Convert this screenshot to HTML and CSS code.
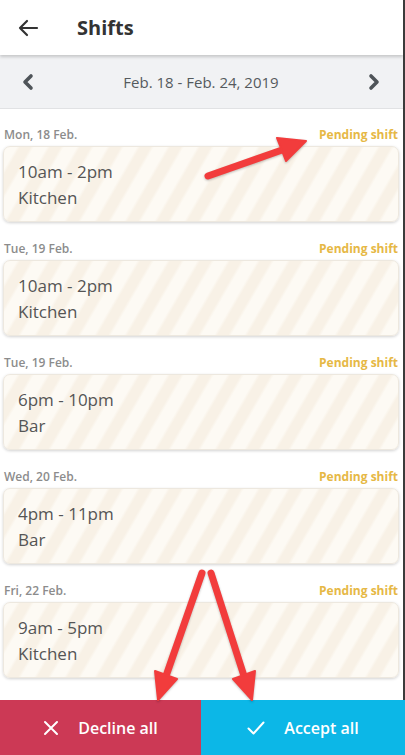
FILE: index.html
```html
<!DOCTYPE html>
<html lang="en">
<head>
    <meta charset="UTF-8">
    <meta name="viewport" content="width=device-width, initial-scale=1.0">
    <title>Shifts</title>
    <link rel="stylesheet" href="styles.css">
</head>
<body>
    <div class="app">
        <div class="screen">
            <header class="topbar">
                <svg class="back" width="22" height="18" viewBox="0 0 22 18">
                    <path d="M20 9H3M10 2L3 9l7 7" fill="none" stroke="#333" stroke-width="2.2" stroke-linecap="round" stroke-linejoin="round"/>
                </svg>
                <h1>Shifts</h1>
            </header>

            <div class="week-nav">
                <svg width="14" height="18" viewBox="0 0 14 18">
                    <path d="M10 3L4 9l6 6" fill="none" stroke="#4f5459" stroke-width="3.6" stroke-linecap="round" stroke-linejoin="round"/>
                </svg>
                <span>Feb. 18 - Feb. 24, 2019</span>
                <svg width="14" height="18" viewBox="0 0 14 18">
                    <path d="M4 3l6 6-6 6" fill="none" stroke="#4f5459" stroke-width="3.6" stroke-linecap="round" stroke-linejoin="round"/>
                </svg>
            </div>

            <div class="shift-list">
                <div class="day">
                    <div class="day-head"><span>Mon, 18 Feb.</span><span class="status">Pending shift</span></div>
                    <div class="shift-card"><div>10am - 2pm</div><div>Kitchen</div></div>
                </div>
                <div class="day">
                    <div class="day-head"><span>Tue, 19 Feb.</span><span class="status">Pending shift</span></div>
                    <div class="shift-card"><div>10am - 2pm</div><div>Kitchen</div></div>
                </div>
                <div class="day">
                    <div class="day-head"><span>Tue, 19 Feb.</span><span class="status">Pending shift</span></div>
                    <div class="shift-card"><div>6pm - 10pm</div><div>Bar</div></div>
                </div>
                <div class="day">
                    <div class="day-head"><span>Wed, 20 Feb.</span><span class="status">Pending shift</span></div>
                    <div class="shift-card"><div>4pm - 11pm</div><div>Bar</div></div>
                </div>
                <div class="day">
                    <div class="day-head"><span>Fri, 22 Feb.</span><span class="status">Pending shift</span></div>
                    <div class="shift-card"><div>9am - 5pm</div><div>Kitchen</div></div>
                </div>
            </div>
        </div>

        <div class="actions">
            <button class="btn decline">
                <svg width="16" height="16" viewBox="0 0 16 16">
                    <path d="M2 2l12 12M14 2L2 14" stroke="#fff" stroke-width="2" stroke-linecap="round"/>
                </svg>
                Decline all
            </button>
            <button class="btn accept">
                <svg width="18" height="14" viewBox="0 0 18 14">
                    <path d="M1.5 7.5l5 5L16.5 1.5" fill="none" stroke="#fff" stroke-width="2" stroke-linecap="round" stroke-linejoin="round"/>
                </svg>
                Accept all
            </button>
        </div>

        <!-- annotation arrows drawn over the screenshot -->
        <svg class="arrows" width="405" height="755" viewBox="0 0 405 755">
            <g fill="#f23c3c" stroke="#f23c3c" stroke-linecap="round" stroke-linejoin="round">
                <line x1="208" y1="176" x2="282" y2="150" stroke-width="7"/>
                <polygon points="306,141 286,161 277,138" stroke-width="2"/>
                <line x1="202" y1="573" x2="166" y2="676" stroke-width="7"/>
                <polygon points="158,700 177,679 155,671" stroke-width="2"/>
                <line x1="211" y1="573" x2="244" y2="676" stroke-width="7"/>
                <polygon points="252,700 255,671 233,679" stroke-width="2"/>
            </g>
        </svg>
    </div>
</body>
</html>
```

FILE: styles.css
```css
body {
    margin: 0;
    font-family: "Open Sans", "Liberation Sans", sans-serif;
    background: #fff;
}

.app {
    position: relative;
    width: 405px;
    height: 755px;
    overflow: hidden;
    display: flex;
    flex-direction: column;
}

.screen {
    flex: 1;
    display: flex;
    flex-direction: column;
    overflow: hidden;
    border-right: 2px solid #3b3b3b;
}

.topbar {
    height: 55px;
    display: flex;
    align-items: center;
    padding-left: 17px;
    background: #fff;
    box-shadow: 0 2px 3px rgba(0, 0, 0, 0.18);
    position: relative;
    z-index: 1;
}

.topbar h1 {
    margin: 0 0 0 38px;
    font-size: 20px;
    font-weight: 700;
    color: #333;
}

.week-nav {
    height: 53px;
    display: flex;
    align-items: center;
    justify-content: space-between;
    padding: 0 22px 0 21px;
    background: #f1f2f4;
    border-bottom: 1px solid #e1e2e4;
    color: #555a5e;
    font-size: 15px;
    font-weight: 500;
}

.shift-list {
    flex: 1;
    padding: 14px 4px 0 3px;
}

.day {
    margin-bottom: 15px;
}

.day-head {
    height: 22px;
    margin-bottom: 1px;
    display: flex;
    align-items: center;
    justify-content: space-between;
    font-size: 12px;
    font-weight: 600;
    color: #8c8c8c;
    padding-left: 1px;
}

.day-head .status {
    color: #e6b845;
    font-weight: 700;
    font-size: 12px;
    padding-right: 1px;
}

.shift-card {
    height: 76px;
    box-sizing: border-box;
    padding: 12px 14px 0;
    border-radius: 7px;
    border: 1px solid #ede8df;
    box-shadow: 0 1px 3px rgba(0, 0, 0, 0.18);
    background: repeating-linear-gradient(120deg, #fdfaf4 0 11px, #f8f1e6 14px 23px, #fdfaf4 26px);
    color: #555;
    font-size: 17px;
    line-height: 26px;
}

.actions {
    height: 55px;
    display: flex;
}

.btn {
    border: 0;
    margin: 0;
    display: flex;
    align-items: center;
    justify-content: center;
    gap: 19px;
    color: #fff;
    font-family: inherit;
    font-size: 16px;
    font-weight: 600;
}

.decline {
    width: 201px;
    background: #cc3955;
}

.accept {
    flex: 1;
    background: #0cb7e7;
}

.arrows {
    position: absolute;
    top: 0;
    left: 0;
    pointer-events: none;
    filter: drop-shadow(0 1px 1px rgba(0, 0, 0, 0.25));
}
```
